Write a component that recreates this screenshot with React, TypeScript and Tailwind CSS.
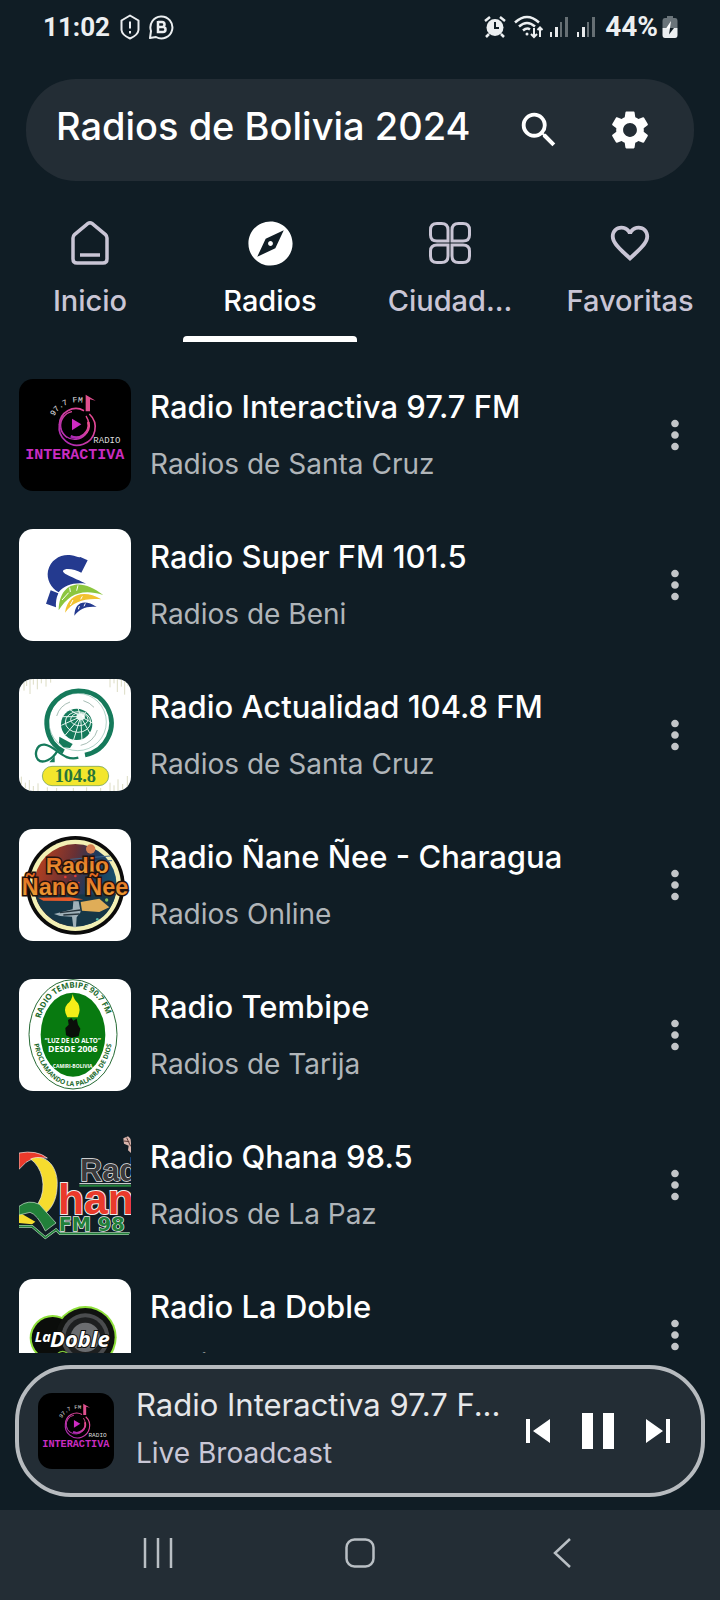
import { ReactNode } from "react";
import {
  MdSearch,
  MdSettings,
  MdExplore,
  MdFavoriteBorder,
  MdMoreVert,
} from "react-icons/md";

interface Station {
  name: string;
  place: string;
  logo: ReactNode;
}

interface Tab {
  label: string;
  icon: ReactNode;
}

const InteractivaLogo = ({ className }: { className: string }) => (
  <svg viewBox="27 27 336 336" className={className} aria-hidden="true">
    <defs>
      <linearGradient id="pink" x1="0" y1="1" x2="1" y2="0">
        <stop offset="0" stopColor="#a626b8" />
        <stop offset="1" stopColor="#f0508c" />
      </linearGradient>
      <path id="fmArc" d="M132 139 A80 80 0 0 1 216 98" />
    </defs>
    <rect x="27" y="27" width="336" height="336" fill="#000" />
    <g fill="none" stroke="url(#pink)">
      <path d="M222 122 A50 50 0 0 0 148 164 A54 54 0 1 0 238 132" strokeWidth="5" />
      <path d="M186 125 A42 42 0 1 0 236 164 A42 42 0 0 0 228 138" strokeWidth="4" />
      <path d="M182 199 A38 38 0 0 0 235 156" strokeWidth="8" />
      <path d="M160 137 A46 46 0 0 0 170 203" strokeWidth="3" />
    </g>
    <path d="M227 74 L257 92 L240 88 V124 H227Z" fill="#e0508f" />
    <path d="M186 146 L214 163 L186 181Z" fill="#d02bc4" />
    <text fill="#e8e8e8" fontSize="24" fontFamily="Liberation Mono, monospace">
      <textPath href="#fmArc">97.7 FM</textPath>
    </text>
    <text x="250" y="220" fill="#ddd" fontSize="27" fontFamily="Liberation Mono, monospace">
      RADIO
    </text>
    <text x="46" y="267" fill="#c92cc0" fontSize="45" fontWeight="700" fontFamily="Liberation Mono, monospace">
      INTERACTIVA
    </text>
  </svg>
);

const SuperLogo = () => (
  <svg viewBox="27 27 336 336" className="size-full" aria-hidden="true">
    <rect x="27" y="27" width="336" height="336" fill="#fff" />
    <path
      d="M233 121 L214 158 C196 148 166 142 159 152 C157 162 190 171 228 191 C190 187 164 195 146 217 C122 202 109 178 114 152 C122 119 153 101 184 106 C198 108 207 114 211 111Z"
      fill="#243a8f"
    />
    <path d="M122 211 L145 220 Q136 240 138 262 L108 251Z" fill="#243a8f" />
    <path d="M146 271 C148 184 214 172 280 225 C216 205 176 222 146 271Z" fill="#8cc63f" />
    <path d="M165 278 C172 222 222 206 274 238 C224 234 190 244 165 278Z" fill="#f2c230" />
    <path d="M193 287 C194 246 224 236 260 261 C226 258 210 268 193 287Z" fill="#243a8f" />
    <path d="M156 240 L176 218 M181 216 L179 203 M200 212 L204 196 M181 255 L189 240 M212 238 L217 229 M205 268 L208 258 M222 259 L226 250" stroke="#fff" strokeWidth="3" />
  </svg>
);

const ActualidadLogo = () => (
  <svg viewBox="27 27 336 336" className="size-full" aria-hidden="true">
    <rect x="27" y="27" width="336" height="336" fill="#fff" />
    <g stroke="#dcdcc4" strokeWidth="3">
      <path d="M32 27V42 M42 27V62 M50 27V48 M60 27V72 M70 27V44 M82 27V58 M94 27V40 M108 27V50 M122 27V38 M300 27V52 M312 27V40 M322 27V66 M334 27V50 M344 27V74 M354 27V48" />
      <path d="M34 363V320 M46 363V338 M58 363V330 M70 363V348 M84 363V340 M112 363V352 M140 363V354 M190 363V354 M230 363V352 M272 363V354 M300 363V338 M312 363V346 M324 363V328 M338 363V342 M352 363V318" />
    </g>
    <path d="M161 245 A97 97 0 1 1 225 255" fill="none" stroke="#157a5b" strokeWidth="14" />
    <circle cx="203" cy="156" r="86" fill="none" stroke="#157a5b" strokeWidth="1" />
    <path d="M140 138 A64 64 0 0 1 180 96 M220 92 A66 66 0 0 1 252 112 M262 180 A64 64 0 0 1 212 226" fill="none" stroke="#7a9b90" strokeWidth="2" />
    <circle cx="200" cy="163" r="47" fill="#157a5b" />
    <g fill="none" stroke="#e9f6f0" strokeWidth="3">
      <ellipse cx="212" cy="140" rx="12" ry="9" fill="#fff" />
      <ellipse cx="208" cy="148" rx="26" ry="19" />
      <ellipse cx="204" cy="156" rx="38" ry="31" />
      <path d="M212 140 L158 140 M212 140 L154 166 M212 140 L166 195 M212 140 L190 212 M212 140 L216 212 M212 140 L240 190 M212 140 L250 160 M212 140 L232 122 M212 140 L204 114 M212 140 L178 118" />
    </g>
    <path d="M148 200 L188 222 L180 234 L160 232 L147 218Z" fill="#157a5b" />
    <path
      d="M205 263 C160 276 138 228 104 224 C78 222 72 255 84 269 C98 283 128 268 142 243"
      fill="none"
      stroke="#157a5b"
      strokeWidth="7"
    />
    <path d="M118 277 L134 258 L134 277Z" fill="#157a5b" />
    <rect x="97" y="289" width="199" height="58" rx="29" fill="#f3e62c" stroke="#5f9450" strokeWidth="2" />
    <text x="196" y="336" textAnchor="middle" fontSize="55" fontWeight="700" fill="#28743a" fontFamily="Liberation Serif, serif">
      104.8
    </text>
  </svg>
);

const NaneLogo = () => (
  <svg viewBox="27 27 336 336" className="size-full" aria-hidden="true">
    <defs>
      <linearGradient id="sky" x1="0" y1="0.3" x2="1" y2="0.6">
        <stop offset="0" stopColor="#b8401e" />
        <stop offset="0.4" stopColor="#693034" />
        <stop offset="0.65" stopColor="#1d3a5e" />
        <stop offset="1" stopColor="#16566e" />
      </linearGradient>
      <linearGradient id="orange" x1="0" y1="0" x2="0" y2="1">
        <stop offset="0" stopColor="#e2661f" />
        <stop offset="1" stopColor="#eda537" />
      </linearGradient>
    </defs>
    <rect x="27" y="27" width="336" height="336" fill="#fff" />
    <circle cx="196" cy="196" r="148" fill="#0b0b0b" />
    <circle cx="196" cy="196" r="137" fill="#f3f0b4" />
    <circle cx="196" cy="196" r="124" fill="url(#sky)" />
    <path d="M74 220 Q190 226 318 222 Q300 290 245 310 Q195 328 148 310 Q88 282 74 220Z" fill="#163646" />
    <path d="M84 233 L180 232 L220 238 L180 243 L100 242Z" fill="#e65a29" />
    <circle cx="242" cy="87" r="14" fill="#d67e50" />
    <path d="M180 118 L300 108 M176 126 L306 122" stroke="#3d6488" strokeWidth="3" />
    <g fill="#e23c37">
      <circle cx="166" cy="171" r="4" />
      <circle cx="182" cy="184" r="4" />
      <circle cx="196" cy="168" r="4" />
      <circle cx="206" cy="188" r="3" />
      <circle cx="150" cy="186" r="3" />
    </g>
    <path d="M212 246 L268 236 L298 262 L268 276 L216 272Z" fill="#dfad58" />
    <path d="M132 282 L188 268 L190 244 L206 244 L212 276 L200 292 L198 322 L190 322 L186 290 L150 288Z" fill="#9fb0b8" />
    <path d="M150 278 L212 270 M160 285 L208 282" stroke="#26343c" strokeWidth="4" />
    <circle cx="290" cy="240" r="5" fill="#8ac05c" />
    <circle cx="262" cy="298" r="4" fill="#56b5a8" />
    <g
      fill="url(#orange)"
      stroke="#24120c"
      strokeWidth="9"
      paintOrder="stroke"
      fontWeight="700"
      textAnchor="middle"
      fontFamily="Liberation Sans, Arial, sans-serif"
    >
      <text x="202" y="159" fontSize="68">
        Radio
      </text>
      <text x="195" y="225" fontSize="70">
        Ñane Ñee
      </text>
    </g>
  </svg>
);

const TembipeLogo = () => (
  <svg viewBox="27 27 336 336" className="size-full" aria-hidden="true">
    <defs>
      <path id="tembipeTop" d="M92 146 C122 22 264 22 292 146" />
      <path id="tembipeBottom" d="M72 222 C108 388 268 392 304 226" />
    </defs>
    <rect x="27" y="27" width="336" height="336" fill="#fff" />
    <ellipse cx="189" cy="193" rx="132" ry="164" fill="#fff" stroke="#276b35" strokeWidth="3" />
    <ellipse cx="189" cy="194" rx="97" ry="126" fill="#087a10" />
    <path d="M188 72 Q192 90 204 100 Q214 118 203 142 H172 Q158 118 172 102 Q186 92 188 72Z" fill="#f4ee18" />
    <path d="M174 150 L184 144 L190 152 L200 146 L204 164 L211 176 L206 199 L184 203 L168 196 L166 174 L176 164Z" fill="#0a0f0a" />
    <g fontFamily="Open Sans, sans-serif" fontWeight="700" fill="#1c6a2c">
      <text fontSize="24">
        <textPath href="#tembipeTop">RADIO TEMBIPE 90.7 FM</textPath>
      </text>
      <text fontSize="20">
        <textPath href="#tembipeBottom">PROCLAMANDO LA PALABRA DE DIOS</textPath>
      </text>
    </g>
    <g fontFamily="Open Sans, sans-serif" fontWeight="700" fill="#fff" textAnchor="middle">
      <text x="188" y="218" fontSize="19">“LUZ DE LO ALTO”</text>
      <text x="188" y="247" fontSize="26">DESDE 2006</text>
      <text x="188" y="293" fontSize="15">CAMIRI-BOLIVIA</text>
    </g>
  </svg>
);

const QhanaLogo = () => (
  <svg viewBox="27 12 336 336" className="size-full" aria-hidden="true">
    <path d="M27 84 Q80 74 112 99 Q70 96 48 112 L27 133Z" fill="#ea3a2b" stroke="#eee" strokeWidth="2" />
    <path
      d="M62 102 C110 82 148 130 141 190 C139 226 124 252 104 266 L84 236 Q106 200 96 156 Q88 122 62 102Z"
      fill="#f6dc2e"
      stroke="#eee"
      strokeWidth="2"
    />
    <path d="M27 262 L76 290 L66 298 L27 294Z" fill="#f6dc2e" />
    <path d="M27 244 Q56 222 88 238 L138 294 L106 318 Q82 268 60 262 L27 270Z" fill="#22803a" stroke="#cfe5d2" strokeWidth="2" />
    <path d="M27 304 H66 L106 338 L138 314 L150 326 H363" fill="none" stroke="#cfe5d2" strokeWidth="8" />
    <path d="M27 304 H66 L106 338 L138 314 L150 326 H363" fill="none" stroke="#22803a" strokeWidth="5" />
    <g fontWeight="700" fontFamily="Liberation Sans, Arial, sans-serif" stroke="#eee" paintOrder="stroke">
      <text x="210" y="167" fontSize="92" fill="#3a3a3c" strokeWidth="4">
        Rad
      </text>
      <text x="144" y="266" fontSize="128" fill="#ea3a2b" strokeWidth="6">
        han
      </text>
      <text x="146" y="318" fontSize="58" fill="#22803a" strokeWidth="4" fontFamily="DejaVu Sans, sans-serif">
        FM 98
      </text>
    </g>
    <path d="M208 176 H363" stroke="#eee" strokeWidth="3" />
    <path d="M208 182 H363" stroke="#22803a" strokeWidth="6" />
    <path d="M340 40 L354 34 L363 42 V84 L354 76 L356 62 L342 56Z" fill="#d8b4ac" />
    <path d="M342 48 L358 50 M350 38 L362 64" stroke="#5d3c38" strokeWidth="3" />
  </svg>
);

const DobleLogo = () => (
  <svg viewBox="27 27 336 336" className="size-full" aria-hidden="true">
    <rect x="27" y="27" width="336" height="336" fill="#fff" />
    <g fill="#8ee03a">
      <circle cx="128" cy="204" r="69" />
      <circle cx="226" cy="202" r="94" />
    </g>
    <circle cx="128" cy="204" r="63" fill="#0b0d0b" />
    <circle cx="226" cy="202" r="88" fill="#101210" />
    <circle cx="226" cy="202" r="72" fill="#4a4c4e" />
    <circle cx="226" cy="202" r="60" fill="#1d1f20" />
    <circle cx="226" cy="202" r="44" fill="#6b6d70" />
    <circle cx="158" cy="262" r="18" fill="none" stroke="#7bc43a" strokeWidth="4" />
    <g
      fill="#fff"
      stroke="#0b0d0b"
      strokeWidth="6"
      paintOrder="stroke"
      fontWeight="700"
      fontStyle="italic"
      fontFamily="Open Sans, sans-serif"
    >
      <text x="74" y="216" fontSize="44">
        La
      </text>
      <text x="120" y="230" fontSize="66">
        Doble
      </text>
    </g>
  </svg>
);

const stations: Station[] = [
  {
    name: "Radio Interactiva 97.7 FM",
    place: "Radios de Santa Cruz",
    logo: <InteractivaLogo className="size-full" />,
  },
  { name: "Radio Super FM 101.5", place: "Radios de Beni", logo: <SuperLogo /> },
  { name: "Radio Actualidad 104.8 FM", place: "Radios de Santa Cruz", logo: <ActualidadLogo /> },
  { name: "Radio Ñane Ñee - Charagua", place: "Radios Online", logo: <NaneLogo /> },
  { name: "Radio Tembipe", place: "Radios de Tarija", logo: <TembipeLogo /> },
  { name: "Radio Qhana 98.5", place: "Radios de La Paz", logo: <QhanaLogo /> },
  { name: "Radio La Doble", place: "Radios de La Paz", logo: <DobleLogo /> },
];

const tabs: Tab[] = [
  {
    label: "Inicio",
    icon: (
      <svg width="40" height="46" viewBox="0 0 40 46" fill="none" stroke="currentColor" strokeWidth="3.500">
        <path d="M3 18 Q3 16 4.500 14.600 L18 3.500 Q20 2 22 3.500 L35.500 14.600 Q37 16 37 18 V39 Q37 43 33 43 H7 Q3 43 3 39Z" />
        <path d="M10 35 H30" />
      </svg>
    ),
  },
  { label: "Radios", icon: <MdExplore size={53} /> },
  {
    label: "Ciudad...",
    icon: (
      <svg width="44" height="44" viewBox="0 0 44 44" fill="none" stroke="currentColor" strokeWidth="3">
        <path d="M20 20 H9 Q2.500 20 2.500 14 V9 Q2.500 2.500 9 2.500 H13.500 Q20 2.500 20 9Z" />
        <path d="M24 20 V9 Q24 2.500 30.500 2.500 H35 Q41.500 2.500 41.500 9 V14 Q41.500 20 35 20Z" />
        <path d="M20 24 V35 Q20 41.500 13.500 41.500 H9 Q2.500 41.500 2.500 35 V30 Q2.500 24 9 24Z" />
        <path d="M24 24 H35 Q41.500 24 41.500 30 V35 Q41.500 41.500 35 41.500 H30.500 Q24 41.500 24 35Z" />
      </svg>
    ),
  },
  { label: "Favoritas", icon: <MdFavoriteBorder size={46} /> },
];

const Signal = () => (
  <svg width="18" height="20" viewBox="0 0 18 20" fill="#e8eaec" aria-hidden="true">
    <rect x="0" y="15" width="2" height="5" />
    <rect x="5" y="10" width="3" height="10" />
    <rect x="10" y="5" width="2" height="15" opacity="0.4" />
    <rect x="15" y="0" width="3" height="20" opacity="0.4" />
  </svg>
);

const StatusBar = () => (
  <div className="flex h-[54px] shrink-0 items-center pl-[43px] pr-[42px] font-['Roboto',sans-serif] text-[26px] font-bold text-[#eceff1]">
    <span>11:02</span>
    <svg width="20" height="26" viewBox="0 0 20 26" fill="none" stroke="currentColor" strokeWidth="2" className="ml-2.5">
      <path d="M10 1.500 L18.500 6.500 V16 Q18 21 10 24.500 Q2 21 1.500 16 V6.500Z" strokeLinejoin="round" />
      <path d="M10 7.500 V14.500 M10 17 V19.500" />
    </svg>
    <svg width="26" height="26" viewBox="0 0 26 26" fill="none" stroke="currentColor" strokeWidth="2" className="ml-2">
      <path d="M2 24 L3 17 A11 11 0 1 1 8 23Z" strokeLinejoin="round" />
      <path d="M10 8 H14 A2.400 2.400 0 0 1 14 13 H10 M10 13 H15 A2.500 2.500 0 0 1 15 18 H10 V7" strokeWidth="2.500" />
    </svg>
    <svg width="22" height="22" viewBox="0 0 22 22" className="ml-auto" aria-hidden="true">
      <path d="M1 5 L6 1 M21 5 L16 1 M5 18 L2 21 M17 18 L20 21" stroke="currentColor" strokeWidth="2.500" />
      <circle cx="11" cy="11.500" r="8.500" fill="currentColor" />
      <path d="M11 6 V12 H15" fill="none" stroke="#101d25" strokeWidth="2" />
    </svg>
    <svg width="30" height="24" viewBox="0 0 30 24" fill="none" stroke="currentColor" strokeWidth="2.500" className="ml-2">
      <path d="M1 7.500 Q13 -3.500 25 7.500 M5 11.500 Q13 4.500 21 11.500 M9 15.500 Q13 12 16 14.500" />
      <circle cx="13" cy="19" r="1.500" fill="currentColor" stroke="none" />
      <path d="M20 13 V22 M17 19 L20 22 L23 19 M26 22 V12 M23.500 15 L26 12.500 L28.500 15" strokeWidth="2" />
    </svg>
    <div className="ml-1.5 flex gap-[9px]">
      <Signal />
      <Signal />
    </div>
    <span className="ml-2.5 text-[28px]">44%</span>
    <svg width="16" height="22" viewBox="0 0 16 22" className="ml-1" aria-hidden="true">
      <path d="M5 0 H11 V2 H13 Q15.500 2 15.500 5 V12 H0.500 V5 Q0.500 2 3 2 H5Z" fill="#6a747a" />
      <path d="M0.500 12 H15.500 V19 Q15.500 22 13 22 H3 Q0.500 22 0.500 19Z" fill="currentColor" />
      <path d="M9 5 L4 12.500 H8 V12Z" fill="#fff" />
      <path d="M8 12 H12 L7 18.500Z" fill="#101d25" />
    </svg>
  </div>
);

const StationRow = ({ station }: { station: Station }) => (
  <li className="flex items-center py-[19px] pl-[19px] pr-[22px]">
    <div className="size-28 shrink-0 overflow-hidden rounded-[14px]">{station.logo}</div>
    <div className="ml-[19px] min-w-0 flex-1 pt-px">
      <p className="truncate text-[31px] leading-10 font-medium text-white">{station.name}</p>
      <p className="mt-[17px] truncate text-[28px] leading-10 text-[#b0b5b9]">{station.place}</p>
    </div>
    <button type="button" aria-label={`Opciones de ${station.name}`} className="text-[#c3c6c9]">
      <MdMoreVert size={46} />
    </button>
  </li>
);

const Player = () => (
  <section className="mx-[15px] mt-3 mb-[13px] flex h-[132px] shrink-0 items-center rounded-[56px] border-4 border-[#b7bbbf] bg-[#232d35] pl-[19px] pr-[31px]">
    <div className="size-[76px] shrink-0 overflow-hidden rounded-[14px]">
      <InteractivaLogo className="size-full" />
    </div>
    <div className="ml-[22px] min-w-0 flex-1 pb-1">
      <p className="text-[31px] leading-10 whitespace-nowrap text-[#e6e7ea]">Radio Interactiva 97.7 F...</p>
      <p className="mt-2 text-[28px] leading-10 whitespace-nowrap text-[#c9c7d6]">Live Broadcast</p>
    </div>
    <div className="flex items-center gap-8 text-white">
      <button type="button" aria-label="Anterior">
        <svg width="24" height="24" viewBox="0 0 24 24" fill="currentColor">
          <path d="M0 0H4V24H0Z M24 0V24L7 12Z" />
        </svg>
      </button>
      <button type="button" aria-label="Pausa">
        <svg width="32" height="36" viewBox="0 0 32 36" fill="currentColor">
          <path d="M0 0H11V36H0Z M21 0H32V36H21Z" />
        </svg>
      </button>
      <button type="button" aria-label="Siguiente">
        <svg width="24" height="24" viewBox="0 0 24 24" fill="currentColor">
          <path d="M20 0H24V24H20Z M0 0V24L17 12Z" />
        </svg>
      </button>
    </div>
  </section>
);

export default function App() {
  return (
    <div className="flex h-screen flex-col overflow-hidden bg-[#101d25] font-['Inter',sans-serif]">
      <StatusBar />

      <header className="mx-[26px] mt-[25px] flex h-[102px] shrink-0 items-center rounded-[50px] bg-[#232d35] pl-[30px] pr-[41px] text-white">
        <h1 className="flex-1 pb-2 text-[38px] leading-12 font-medium whitespace-nowrap">
          Radios de Bolivia 2024
        </h1>
        <div className="flex gap-[45px]">
          <button type="button" aria-label="Buscar">
            <MdSearch size={46} />
          </button>
          <button type="button" aria-label="Ajustes">
            <MdSettings size={46} />
          </button>
        </div>
      </header>

      <nav className="grid shrink-0 grid-cols-4 pt-[35px]">
        {tabs.map((tab, index) => (
          <button
            type="button"
            key={tab.label}
            className={`flex flex-col items-center ${index === 1 ? "text-white" : "text-[#c9c5d5]"}`}
          >
            <span className="flex h-[54px] items-center justify-center">{tab.icon}</span>
            <span className="mt-[11px] text-[29px] leading-10 font-medium whitespace-nowrap">
              {tab.label}
            </span>
            <span
              className={`mt-[15px] h-1.5 w-[174px] rounded-t ${index === 1 ? "bg-white" : ""}`}
            />
          </button>
        ))}
      </nav>

      <ul className="mt-[18px] min-h-0 flex-1 overflow-hidden">
        {stations.map((station) => (
          <StationRow key={station.name} station={station} />
        ))}
      </ul>

      <Player />

      <footer className="flex h-[90px] shrink-0 items-center justify-around bg-[#232d35] px-[57px] pb-1 text-[#b9bfc4]">
        <button type="button" aria-label="Recientes">
          <svg width="30" height="30" viewBox="0 0 30 30" stroke="currentColor" strokeWidth="2.500">
            <path d="M2 0V30 M15 0V30 M28 0V30" />
          </svg>
        </button>
        <button type="button" aria-label="Inicio del sistema">
          <svg width="30" height="30" viewBox="0 0 30 30" fill="none" stroke="currentColor" strokeWidth="2.500">
            <rect x="1.500" y="1.500" width="27" height="27" rx="8" />
          </svg>
        </button>
        <button type="button" aria-label="Volver">
          <svg width="30" height="30" viewBox="0 0 30 30" fill="none" stroke="currentColor" strokeWidth="2.500">
            <path d="M23 1 L8 15 L23 29" />
          </svg>
        </button>
      </footer>
    </div>
  );
}
